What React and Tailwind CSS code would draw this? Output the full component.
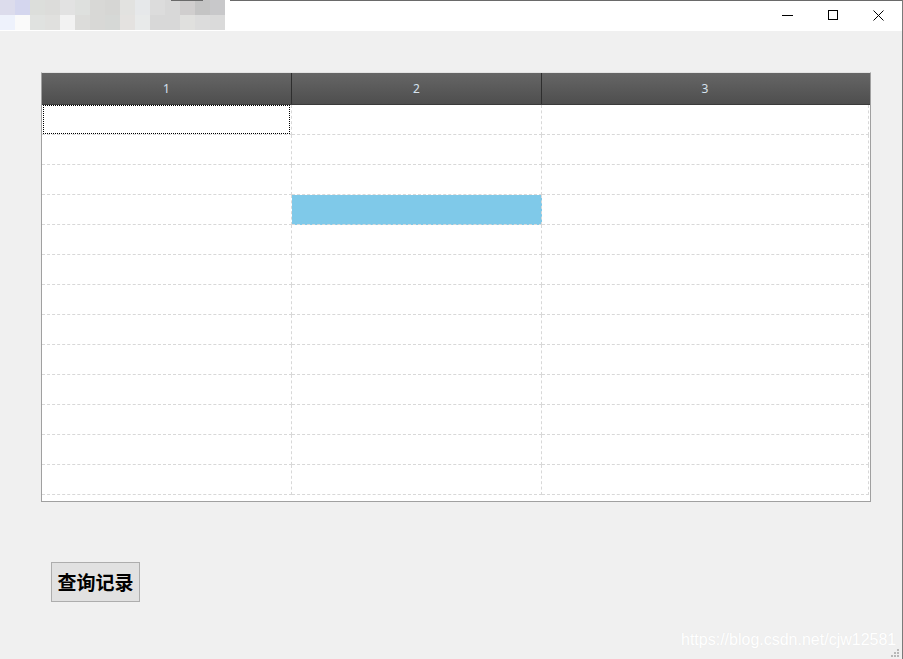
import { useState } from "react";

const mosaicTop = ["#dcdcec", "#d4d6ee", "#dcdedb", "#dcdcda", "#e2e2e2", "#dee0de", "#d8d8d6", "#d6d6d4", "#e2e2e0", "#e6e8ea", "#dcdcdc", "#d8d8d8", "#d0cece", "#c4c4c4", "#c8c8ca"];
const mosaicBottom = ["#eef2fc", "#fafafa", "#e0e2e0", "#e0e0de", "#f2f2f2", "#dcdcda", "#d8d8d6", "#d6d8d6", "#e4e2e0", "#e8eaea", "#d8d8d8", "#d8d8d8", "#e0e0de", "#dcdcdc", "#dadada"];

const rows = Array.from({ length: 13 }, (_, i) => i);

const TitleBar = () => (
    <div className="relative flex h-[31px] bg-white">
        {/* blurred app icon + title */}
        <div className="flex flex-col">
            <div className="flex">
                {mosaicTop.map((c, i) => (
                    <div key={i} className="h-[15px] w-[15px]" style={{ backgroundColor: c }} />
                ))}
            </div>
            <div className="flex">
                {mosaicBottom.map((c, i) => (
                    <div key={i} className="h-[15px] w-[15px]" style={{ backgroundColor: c }} />
                ))}
            </div>
        </div>
        <div className="absolute left-[171px] top-0 h-px w-[32px] bg-[#6a6a6a]" />
        <div className="absolute left-[230px] top-0 h-px w-[672px] bg-[#6a6a6a]" />
        <div className="ml-auto flex h-full">
            <div className="flex w-[46px] items-center justify-center">
                <svg width="11" height="11" viewBox="0 0 11 11">
                    <path d="M0 5.5H11" stroke="#000" strokeWidth="1" />
                </svg>
            </div>
            <div className="flex w-[46px] items-center justify-center">
                <svg width="11" height="11" viewBox="0 0 11 11">
                    <rect x="0.5" y="0.5" width="9" height="9" fill="none" stroke="#000" strokeWidth="1" />
                </svg>
            </div>
            <div className="flex w-[46px] items-center justify-center pr-[2px]">
                <svg width="11" height="11" viewBox="0 0 11 11">
                    <path d="M0.5 0.5L10.5 10.5M10.5 0.5L0.5 10.5" stroke="#000" strokeWidth="1" />
                </svg>
            </div>
        </div>
    </div>
);

const Grid = () => {
    const [focus] = useState({ row: 0, col: 0 });
    const selected = { row: 3, col: 1 };

    return (
        <div className="ml-[41px] mt-[41px] flex h-[430px] w-[830px] flex-col border border-[#a0a0a0] border-t-[#e3e3e3] bg-white">
            {/* header */}
            <div className="flex h-[32px] border-b border-[#3a3a3a] bg-gradient-to-b from-[#666666] to-[#4e4e4e] text-[12px] text-[#d6e2ee] font-['Noto_Sans',sans-serif]">
                <div className="flex w-[250px] items-center justify-center border-r border-[#2e2e2e]">1</div>
                <div className="flex w-[250px] items-center justify-center border-r border-[#2e2e2e]">2</div>
                <div className="flex flex-1 items-center justify-center pr-[2px]">3</div>
            </div>
            {/* body */}
            {rows.map((r) => (
                <div key={r} className="flex h-[30px]">
                    {[0, 1, 2].map((c) => (
                        <div
                            key={c}
                            className={
                                (c === 2 ? "w-[327px] " : "w-[250px] ") +
                                "border-b border-r border-dashed border-[#d8d8d8] " +
                                (r === selected.row && c === selected.col ? "bg-[#7fc9e9]" : "")
                            }
                        >
                            {r === focus.row && c === focus.col && (
                                <div className="ml-[1px] h-[29px] w-[247px] border border-dotted border-black" />
                            )}
                        </div>
                    ))}
                </div>
            ))}
        </div>
    );
};

export default function App() {
    return (
        <div className="relative h-[659px] w-[903px] overflow-hidden border-r border-[#7a7a7a] bg-[#f0f0f0]">
            <TitleBar />
            <Grid />
            <div className="ml-[51px] mt-[60px]">
                <button className="flex h-[40px] w-[89px] items-center justify-center border border-[#adadad] bg-[#e1e1e1] text-[19px] font-bold text-black font-['Noto_Sans_CJK_SC',sans-serif]">
                    查询记录
                </button>
            </div>
            {/* csdn watermark */}
            <div className="absolute left-[681px] top-[628px] text-[16px] text-white [text-shadow:0_0_1px_#e4e4e4] font-['Liberation_Sans',sans-serif]">
                https://blog.csdn.net/cjw12581
            </div>
            {/* resize grip */}
            <div className="absolute bottom-[2px] right-[3px] grid grid-cols-3 gap-[1px]">
                <div className="h-[2px] w-[2px]" />
                <div className="h-[2px] w-[2px]" />
                <div className="h-[2px] w-[2px] bg-[#b8b8b8]" />
                <div className="h-[2px] w-[2px]" />
                <div className="h-[2px] w-[2px] bg-[#b8b8b8]" />
                <div className="h-[2px] w-[2px] bg-[#b8b8b8]" />
                <div className="h-[2px] w-[2px] bg-[#b8b8b8]" />
                <div className="h-[2px] w-[2px] bg-[#b8b8b8]" />
                <div className="h-[2px] w-[2px] bg-[#b8b8b8]" />
            </div>
        </div>
    );
}
